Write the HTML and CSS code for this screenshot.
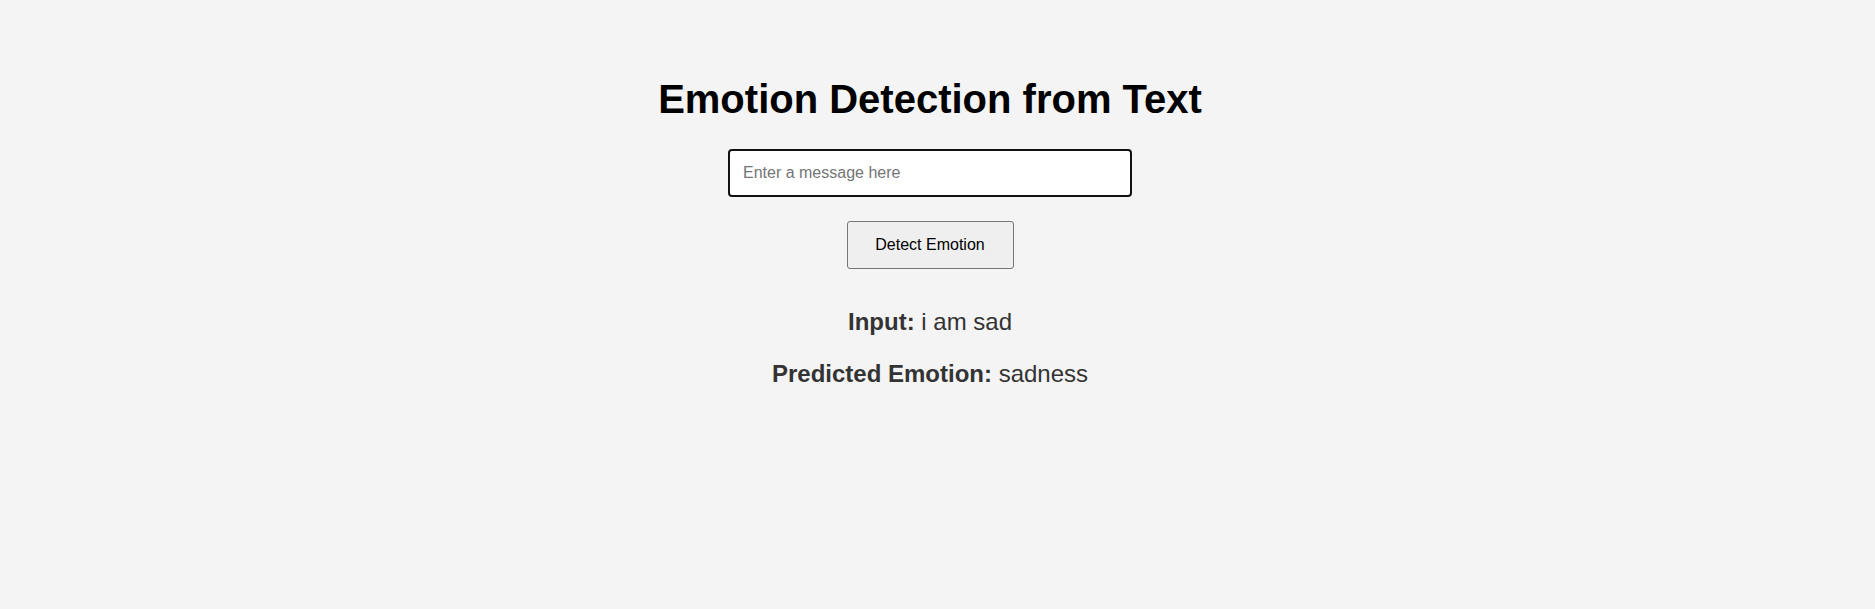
FILE: index.html
```html
<!DOCTYPE html>
<html lang="en">
<head>
<meta charset="utf-8">
<title>Emotion Detection from Text</title>
<link rel="stylesheet" href="styles.css">
</head>
<body>
<main class="page">
  <h1 class="title">Emotion Detection from Text</h1>
  <form class="form">
    <input class="message" type="text" placeholder="Enter a message here">
    <button class="detect" type="button">Detect Emotion</button>
  </form>
  <section class="result">
    <p class="line"><strong>Input:</strong> i am sad</p>
    <p class="line"><strong>Predicted Emotion:</strong> sadness</p>
  </section>
</main>
</body>
</html>
```

FILE: styles.css
```css
html, body {
  margin: 0;
  padding: 0;
  background: #f4f4f4;
}

body {
  font-family: "Liberation Sans", Arial, sans-serif;
}

.page {
  display: flex;
  flex-direction: column;
  align-items: center;
  padding: 76px 15px 0 0;
}

.title {
  margin: 0;
  font-size: 40px;
  font-weight: bold;
  line-height: 46px;
  color: #000;
}

.form {
  display: flex;
  flex-direction: column;
  align-items: center;
  gap: 24px;
  margin-top: 27px;
}

.message {
  box-sizing: border-box;
  width: 404px;
  height: 48px;
  padding: 0 13px;
  border: 2px solid #111;
  border-radius: 4px;
  background: #fff;
  font-family: "Liberation Sans", Arial, sans-serif;
  font-size: 16px;
  color: #000;
  outline: none;
}

.message::placeholder {
  color: #757575;
}

.detect {
  box-sizing: border-box;
  width: 167px;
  height: 48px;
  border: 1px solid #767676;
  border-radius: 3px;
  background: #efefef;
  font-family: "Liberation Sans", Arial, sans-serif;
  font-size: 16px;
  color: #000;
  padding: 0;
}

.result {
  margin-top: 39px;
  display: flex;
  flex-direction: column;
  align-items: center;
  gap: 24px;
}

.line {
  margin: 0;
  font-size: 24px;
  line-height: 27.6px;
  color: #333;
}
```
